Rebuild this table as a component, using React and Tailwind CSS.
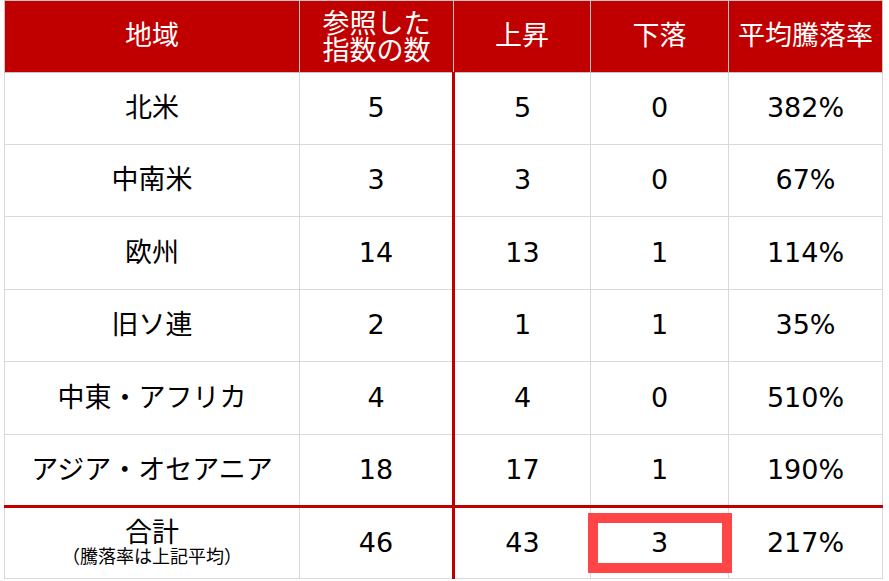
const rows = [
  { region: "北米", refs: 5, up: 5, down: 0, avg: "382%", h: "h-[72px]" },
  { region: "中南米", refs: 3, up: 3, down: 0, avg: "67%", h: "h-[72px]" },
  { region: "欧州", refs: 14, up: 13, down: 1, avg: "114%", h: "h-[73px]" },
  { region: "旧ソ連", refs: 2, up: 1, down: 1, avg: "35%", h: "h-[72px]" },
  { region: "中東・アフリカ", refs: 4, up: 4, down: 0, avg: "510%", h: "h-[73px]" },
  { region: "アジア・オセアニア", refs: 18, up: 17, down: 1, avg: "190%", h: "h-[72px]" }
];

const th = "border border-[#c4c4c4] bg-[#c00000] text-white font-normal text-center align-middle p-0";
const td = "border border-[#d9d9d9] text-center align-middle p-0";
const total = td + " border-t-[3px] border-t-[#c00000]";

export default function App() {
  return (
    <div
      className="w-[889px] h-[581px] bg-white pl-[4px] text-[27px] text-black"
      style={{ fontFamily: '"DejaVu Sans", "Noto Sans CJK JP", sans-serif' }}
    >
      <table className="table-fixed border-collapse w-[878px]">
        <colgroup>
          <col className="w-[295px]" />
          <col className="w-[154px]" />
          <col className="w-[137px]" />
          <col className="w-[138px]" />
          <col className="w-[154px]" />
        </colgroup>
        <thead>
          <tr className="h-[72px]">
            <th className={th}>地域</th>
            <th className={th}>
              <div className="leading-[27px] pt-[1px]">
                参照した
                <br />
                指数の数
              </div>
            </th>
            <th className={th}>上昇</th>
            <th className={th}>下落</th>
            <th className={th}>平均騰落率</th>
          </tr>
        </thead>
        <tbody>
          {rows.map((r) => (
            <tr key={r.region} className={r.h}>
              <td className={td}>{r.region}</td>
              <td className={td}>{r.refs}</td>
              <td className={td + " border-l-[3px] border-l-[#c00000]"}>{r.up}</td>
              <td className={td}>{r.down}</td>
              <td className={td}>{r.avg}</td>
            </tr>
          ))}
          <tr className="h-[72px]">
            <td className={total}>
              <div className="leading-[27px]">合計</div>
              <div className="text-[18px] leading-[22px]">（騰落率は上記平均）</div>
            </td>
            <td className={total}>46</td>
            <td className={total + " border-l-[3px] border-l-[#c00000]"}>43</td>
            <td className={total + " relative"}>
              3
              <div className="absolute left-[-3px] right-[-4px] top-[5px] bottom-[5px] border-[10px] border-[#ff4545]" />
            </td>
            <td className={total}>217%</td>
          </tr>
        </tbody>
      </table>
    </div>
  );
}
